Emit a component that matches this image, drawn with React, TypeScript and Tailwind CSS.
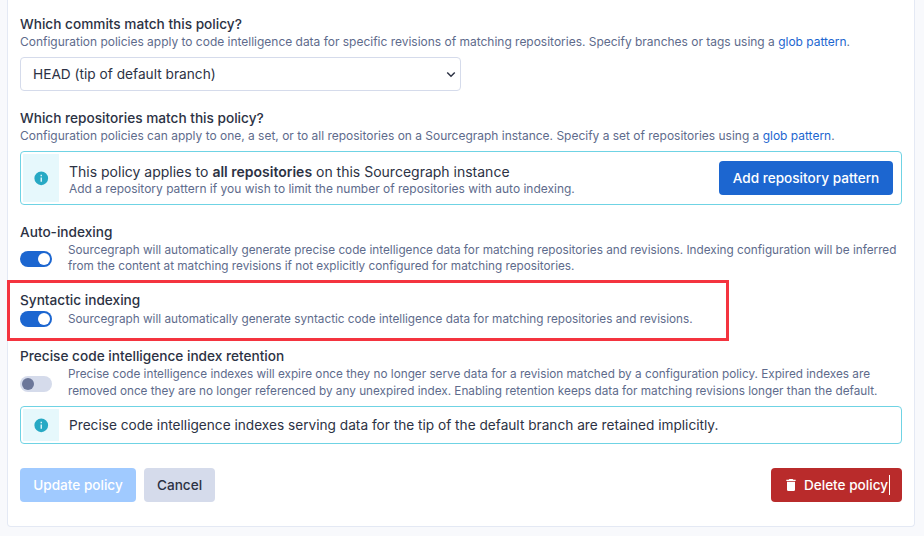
function InfoIcon() {
  return (
    <svg viewBox="0 0 24 24" className="w-[16.5px] h-[16.5px]" fill="#27a9c4">
      <path d="M13 9h-2V7h2m0 10h-2v-6h2m-1-9A10 10 0 0 0 2 12a10 10 0 0 0 10 10 10 10 0 0 0 10-10A10 10 0 0 0 12 2Z" />
    </svg>
  );
}

function TrashIcon() {
  return (
    <svg viewBox="0 0 24 24" className="w-4 h-4" fill="white">
      <path d="M19 4h-3.5l-1-1h-5l-1 1H5v2h14M6 19a2 2 0 0 0 2 2h8a2 2 0 0 0 2-2V7H6v12Z" />
    </svg>
  );
}

function Toggle({ on }: { on: boolean }) {
  return (
    <div
      className={`w-8 h-4 rounded-full flex items-center shrink-0 px-[2px] ${
        on ? 'bg-[#1c66d0] justify-end' : 'bg-[#d5dbeb] justify-start'
      }`}
    >
      <div className={`w-3 h-3 rounded-full ${on ? 'bg-white' : 'bg-[#6b7699]'}`} />
    </div>
  );
}

function InfoBox({ children, h }: { children: React.ReactNode; h: string }) {
  return (
    <div className={`flex items-stretch border border-[#6fd3e4] rounded-[4px] p-[2px] ${h}`}>
      <div className="w-9 bg-[#e6f8fc] flex items-center justify-center shrink-0">
        <InfoIcon />
      </div>
      {children}
    </div>
  );
}

function Label({ children }: { children: React.ReactNode }) {
  return <div className="text-[13.65px] leading-[18px] font-medium text-[#2c3244]">{children}</div>;
}

export default function App() {
  return (
    <div
      className="w-[924px] h-[536px] bg-[#f8f9fc] overflow-hidden relative"
      style={{ fontFamily: 'Inter, sans-serif' }}
    >
      <div className="ml-[7px] w-[908px] h-[527px] bg-white border border-t-0 border-[#e4e9f4] rounded-b-[4px] pl-3 pr-3">
        {/* commits */}
        <div className="pt-[15px]">
          <Label>Which commits match this policy?</Label>
          <p className="text-[11.97px] leading-[18px] text-[#5e6b8c]">
            Configuration policies apply to code intelligence data for specific revisions of matching repositories.
            Specify branches or tags using a <span className="text-[#1c66d0]">glob pattern</span>.
          </p>
          <div className="mt-[6px] w-[441px] h-[34px] border border-[#d5dbeb] rounded-[4px] flex items-center justify-between pl-3 pr-[4px] text-[13.7px] text-[#2c3244]">
            <span>HEAD (tip of default branch)</span>
            <svg viewBox="0 0 16 16" className="w-[10px] h-[10px]" fill="none" stroke="#2c3244" strokeWidth="2.4">
              <path d="M2 5.5l6 6 6-6" />
            </svg>
          </div>
        </div>

        {/* repositories */}
        <div className="mt-[18px]">
          <Label>Which repositories match this policy?</Label>
          <p className="text-[11.97px] leading-[18px] text-[#5e6b8c]">
            Configuration policies can apply to one, a set, or to all repositories on a Sourcegraph instance. Specify a
            set of repositories using a <span className="text-[#1c66d0]">glob pattern</span>.
          </p>
          <div className="mt-[6px]">
            <InfoBox h="h-[54px]">
              <div className="flex-1 pl-[10px] pt-[9px]">
                <div className="text-sm leading-[17px] text-[#2c3244]">
                  This policy applies to <span className="font-semibold">all repositories</span> on this Sourcegraph
                  instance
                </div>
                <div className="text-[11.97px] leading-[17px] text-[#5e6b8c]">
                  Add a repository pattern if you wish to limit the number of repositories with auto indexing.
                </div>
              </div>
              <button className="self-center mr-[6px] w-[174px] h-[34px] bg-[#1c66d0] rounded-[4px] text-white text-[13.6px] font-medium">
                Add repository pattern
              </button>
            </InfoBox>
          </div>
        </div>

        {/* auto-indexing */}
        <div className="mt-[18px]">
          <Label>Auto-indexing</Label>
          <div className="flex gap-4 mt-[1px]">
            <div className="pt-[9px]">
              <Toggle on />
            </div>
            <p className="text-[11.75px] leading-4 text-[#5e6b8c]">
              Sourcegraph will automatically generate precise code intelligence data for matching repositories and
              revisions. Indexing configuration will be inferred from the content at matching revisions if not
              explicitly configured for matching repositories.
            </p>
          </div>
        </div>

        {/* syntactic */}
        <div className="mt-[17px]">
          <Label>Syntactic indexing</Label>
          <div className="flex gap-4 items-center mt-[2px]">
            <Toggle on />
            <p className="text-[11.75px] leading-4 text-[#5e6b8c]">
              Sourcegraph will automatically generate syntactic code intelligence data for matching repositories and
              revisions.
            </p>
          </div>
        </div>

        {/* retention */}
        <div className="mt-[20px]">
          <Label>Precise code intelligence index retention</Label>
          <div className="flex gap-4 mt-[1px]">
            <div className="pt-[10px]">
              <Toggle on={false} />
            </div>
            <p className="text-[11.75px] leading-[17px] text-[#5e6b8c]">
              Precise code intelligence indexes will expire once they no longer serve data for a revision matched by a
              configuration policy. Expired indexes are removed once they are no longer referenced by any unexpired
              index. Enabling retention keeps data for matching revisions longer than the default.
            </p>
          </div>
          <div className="mt-[6px]">
            <InfoBox h="h-[38px]">
              <div className="flex items-center pl-[10px] text-[13.67px] text-[#2c3244]">
                Precise code intelligence indexes serving data for the tip of the default branch are retained
                implicitly.
              </div>
            </InfoBox>
          </div>
        </div>

        {/* actions */}
        <div className="mt-[24px] flex items-center">
          <button className="w-[116px] h-[34px] bg-[#a0caff] rounded-[4px] text-white text-[13.6px] font-medium">
            Update policy
          </button>
          <button className="ml-2 w-[71px] h-[34px] bg-[#d5dbeb] rounded-[4px] text-[#2c3244] text-[13.6px] font-medium">
            Cancel
          </button>
          <button className="ml-auto w-[131px] h-[34px] bg-[#b92b2b] rounded-[4px] text-white text-[13.6px] font-medium flex items-center justify-center gap-[5px]">
            <TrashIcon />
            <span className="border-r border-white pr-[1px]">Delete policy</span>
          </button>
        </div>
      </div>

      {/* annotation drawn over the screenshot */}
      <div className="absolute left-[7px] top-[280px] w-[722px] h-[61px] border-[3px] border-[#f4343f]" />
    </div>
  );
}
